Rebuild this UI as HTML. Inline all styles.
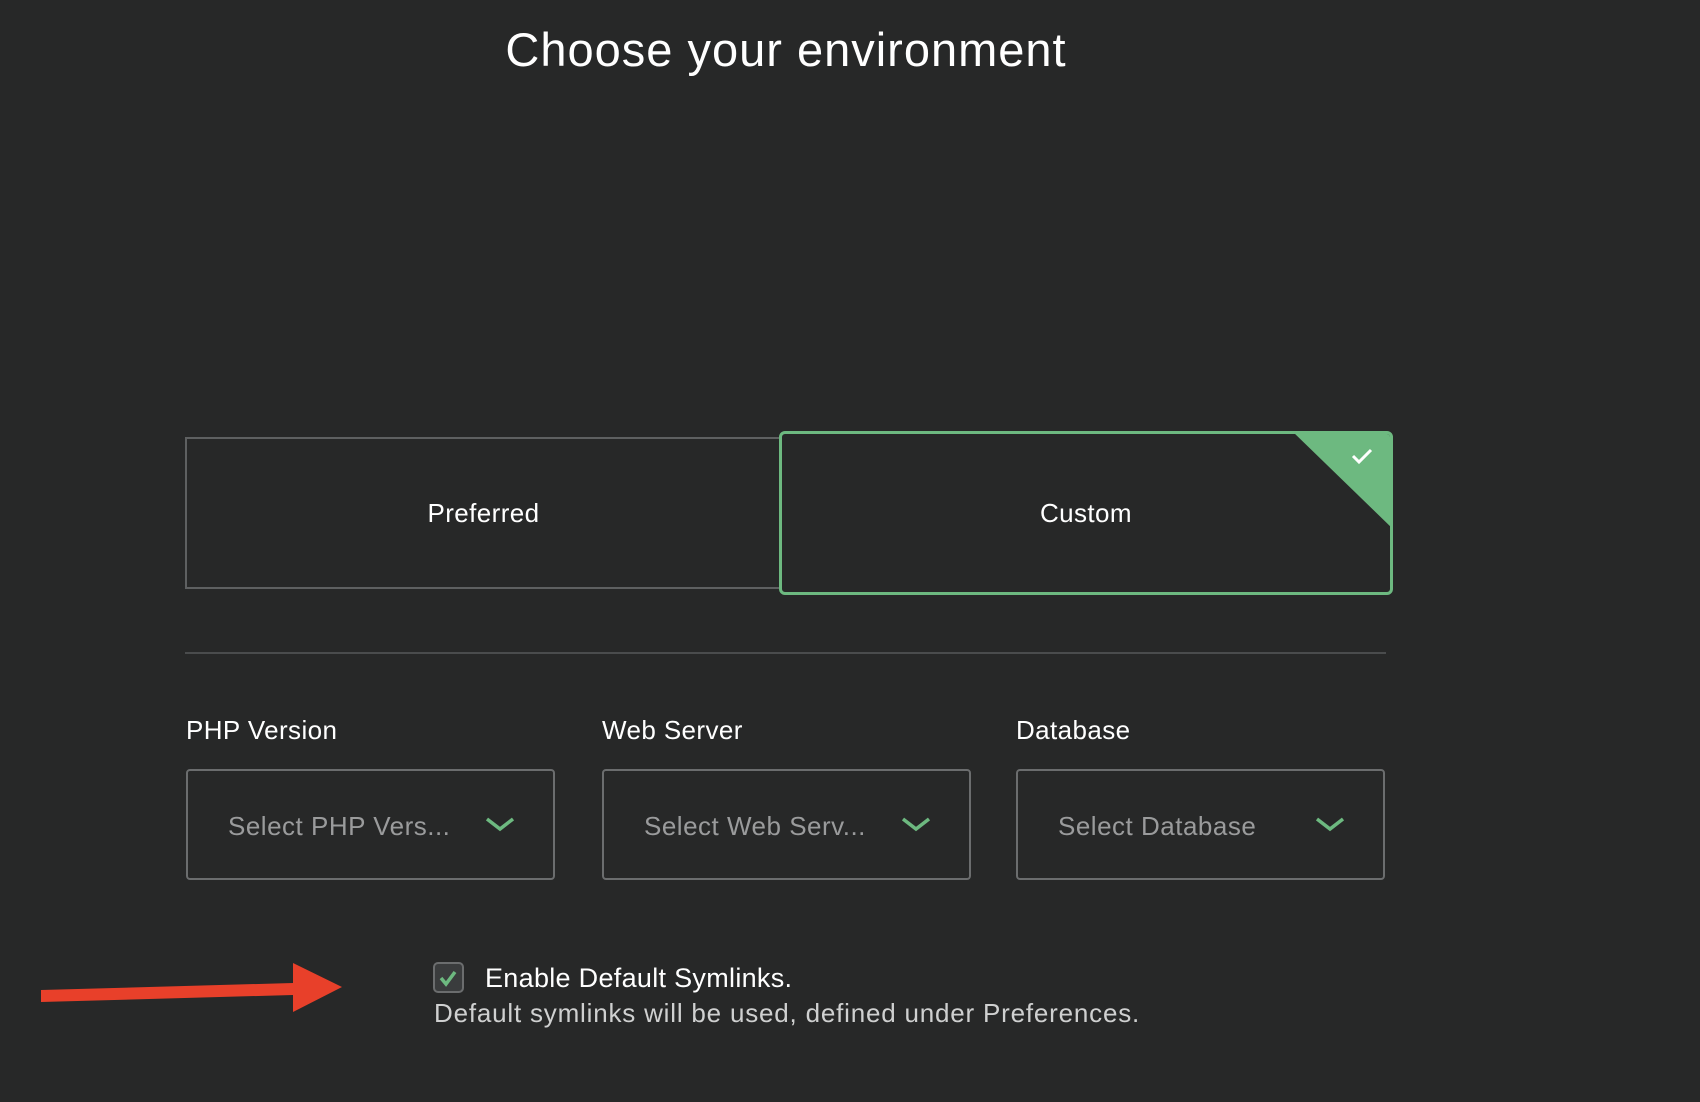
<!DOCTYPE html>
<html><head><meta charset="utf-8"><style>
body{margin:0;width:1700px;height:1102px;background:#272828;position:relative;overflow:hidden;font-family:"Liberation Sans",sans-serif;color:#fff}
.a{position:absolute}
.title{left:0;width:1572px;text-align:center;top:22px;font-size:47px;letter-spacing:1px;color:#fff}
.box{box-sizing:border-box;display:flex;align-items:center;justify-content:center;font-size:26px;letter-spacing:0.4px}
.lbl{font-size:26px;top:715px;letter-spacing:0.4px}
.dd{top:769px;width:369px;height:111px;box-sizing:border-box;border:2px solid #6b6d6e;border-radius:4px}
.dd span{position:absolute;left:40px;top:40px;font-size:26px;color:#9a9b9c;letter-spacing:0.5px}
.dd svg{position:absolute;right:38px;top:45px}
</style></head><body>
<div class="a title">Choose your environment</div>
<div class="a box" style="left:185px;top:437px;width:595px;height:152px;border:2px solid #5e6061;border-right:none">Preferred</div>
<div class="a box" style="left:779px;top:431px;width:614px;height:164px;border:3px solid #6db980;border-radius:6px;overflow:hidden">Custom
<svg class="a" style="right:-3px;top:-3px" width="101" height="101"><polygon points="0,0 101,0 101,98" fill="#6db980"/><path d="M61 25 l6 6 l12 -12" stroke="#fff" stroke-width="3" fill="none"/></svg></div>
<div class="a" style="left:185px;top:652px;width:1201px;height:2px;background:#4a4c4d"></div>
<div class="a lbl" style="left:186px">PHP Version</div>
<div class="a lbl" style="left:602px">Web Server</div>
<div class="a lbl" style="left:1016px">Database</div>
<div class="a dd" style="left:186px"><span>Select PHP Vers...</span><svg width="30" height="16"><path d="M2 3 l13 10 l13 -10" stroke="#6db980" stroke-width="3.5" fill="none"/></svg></div>
<div class="a dd" style="left:602px"><span>Select Web Serv...</span><svg width="30" height="16"><path d="M2 3 l13 10 l13 -10" stroke="#6db980" stroke-width="3.5" fill="none"/></svg></div>
<div class="a dd" style="left:1016px"><span>Select Database</span><svg width="30" height="16"><path d="M2 3 l13 10 l13 -10" stroke="#6db980" stroke-width="3.5" fill="none"/></svg></div>
<div class="a" style="left:433px;top:962px;width:31px;height:31px;box-sizing:border-box;border:2px solid #6b6d6e;border-radius:5px;background:#3a3c3d">
<svg width="27" height="27"><path d="M6 14 l5 6 l9 -12" stroke="#6db980" stroke-width="3.5" fill="none"/></svg></div>
<div class="a" style="left:485px;top:963px;font-size:27px;letter-spacing:0.3px">Enable Default Symlinks.</div>
<div class="a" style="left:434px;top:998px;font-size:26px;color:#cfd0d0;letter-spacing:0.8px">Default symlinks will be used, defined under Preferences.</div>
<svg class="a" style="left:0;top:950px" width="360" height="70"><polygon points="41,40 293,33 293,45 41,52" fill="#e8402a"/><polygon points="293,13 342,37 293,62" fill="#e8402a"/></svg>
</body></html>
